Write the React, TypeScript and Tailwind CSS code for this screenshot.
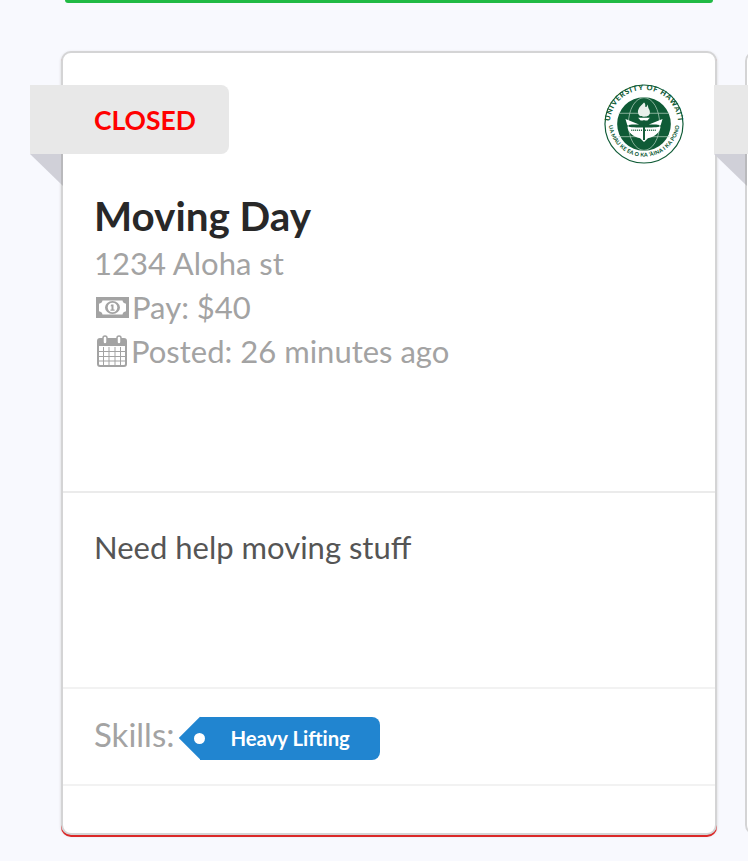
const ribbonShape = 'absolute top-[32px] left-[-33px] h-[69px] bg-[#e8e8e8]';

function MoneyIcon() {
  return (
    <svg width="33" height="21" viewBox="0 0 33 21" className="shrink-0" fill="#a3a3a3">
      <path fillRule="evenodd" d="M0 0h33v21H0zM6.500 3.500C6.200 5.400 5 6.300 3 6.700v7.600c2 .4 3.200 1.300 3.500 3.200h20c.3-1.900 1.500-2.800 3.500-3.200V6.700c-2-.4-3.200-1.300-3.500-3.200z" />
      <ellipse cx="16.500" cy="10.500" rx="7.500" ry="6.500" />
      <circle cx="16.500" cy="10.500" r="4.800" fill="#fff" />
      <path d="M15.200 7.500h2.300v5h1.100v1.200h-4.200v-1.200h1.100V9.200h-1z" />
    </svg>
  );
}

function CalendarIcon() {
  return (
    <svg width="30" height="32" viewBox="0 0 30 32" className="shrink-0" fill="none" stroke="#a3a3a3">
      <rect x="1" y="4" width="28" height="27" rx="2" strokeWidth="2" />
      <path d="M1 5h28v6H1z" fill="#a3a3a3" stroke="none" />
      <path d="M6.500 12v18M12 12v18M18 12v18M23.500 12v18M1 16.500h28M1 21.500h28M1 26h28" strokeWidth="1" />
      <rect x="6" y="1" width="4" height="8" rx="2" fill="#fff" strokeWidth="1.500" />
      <rect x="20" y="1" width="4" height="8" rx="2" fill="#fff" strokeWidth="1.500" />
    </svg>
  );
}

function Seal() {
  return (
    <svg width="80" height="80" viewBox="0 0 82 82" className="shrink-0">
      <defs>
        <path id="seal-top" d="M6.500 47A35 35 0 1 1 75.500 47" />
        <path id="seal-bottom" d="M5 44A36.500 36.500 0 0 0 77 44" />
      </defs>
      <circle cx="41" cy="41" r="40" fill="#fff" stroke="#0f5b36" strokeWidth="1.200" />
      <circle cx="41" cy="41" r="27.500" fill="#0f5b36" />
      <text fill="#0f5b36" className="font-['Lato',sans-serif] font-black text-[7.500px] tracking-[0.8px]">
        <textPath href="#seal-top" startOffset="50%" textAnchor="middle">UNIVERSITY OF HAWAI‘I</textPath>
      </text>
      <text fill="#0f5b36" className="font-['Lato',sans-serif] font-black text-[5.500px] tracking-[0.2px]">
        <textPath href="#seal-bottom" startOffset="50%" textAnchor="middle">UA MAU KE EA O KA ‘ĀINA I KA PONO</textPath>
      </text>
      <g fill="none" stroke="#a9c8b6" strokeWidth="0.800">
        <ellipse cx="41" cy="41" rx="16" ry="27" />
        <path d="M15 30h52M15 54h52" />
      </g>
      <path d="M41 19c-4 4-7 7-6 11 .4 2 2 3.500 6 3.500s5.600-1.500 6-3.500c.6-4-2-4-2-9-1 2-2 3-2.500 2.500-.5-1 .5-3-1.500-4.500z" fill="#e9f0eb" />
      <path d="M35 34.500h12l-2.500 3h-7z" fill="#fff" />
      <path d="M22 36l14 5.500c-5 0-9-.5-12 1zM60 36l-14 5.500c5 0 9-.5 12 1z" fill="#fff" />
      <path d="M24 43.500c5 1.500 29 1.500 34 0-.5 6-5 10-13 12l-4 4-4-4c-8-2-12.500-6-13-12z" fill="#fff" />
      <path d="M28 47.500h26" stroke="#0f5b36" strokeWidth="1.500" strokeDasharray="1 1" />
      <path d="M40 37.500h2v20h-2z" fill="#0f5b36" />
    </svg>
  );
}

function Ribbon({ label }: { label?: string }) {
  return (
    <>
      <div className={`${ribbonShape} w-[199px] rounded-r-[8px] flex items-center pl-[64px] pt-[2px]`}>
        {label && <span className="text-[26.500px] leading-none font-bold text-[#ff0000]">{label}</span>}
      </div>
      <div className="absolute top-[101px] left-[-33px] w-[33px] h-[32px] bg-[linear-gradient(to_right,#d0d0d8_31px,#b9b9bc_31px)] [clip-path:polygon(0_0,100%_0,100%_100%)]" />
    </>
  );
}

export default function App() {
  return (
    <div className="w-[748px] h-[861px] overflow-hidden bg-[#f8f9fe] font-['Lato',sans-serif]">
      <div className="ml-[65px] w-[648px] h-[3px] rounded-b-[4px] bg-[#21ba45]" />
      <div className="flex gap-[28px] mt-[48px] ml-[61px]">
        <div className="relative shrink-0 w-[656px] h-[784px] flex flex-col rounded-[10px] bg-white border-2 border-[#d4d4d5] shadow-[0_2px_0_0_#db2828,0_1px_3px_0_#d4d4d5]">
          <Ribbon label="CLOSED" />
          <div className="h-[438px] shrink-0 pl-[31px] pt-[140px] relative">
            <div className="absolute top-[31px] right-[31px]">
              <Seal />
            </div>
            <h2 className="text-[40.400px] leading-[46px] font-bold text-[#282828]">Moving Day</h2>
            <div className="mt-[2px] text-[31px] leading-[44px] text-[#a3a3a3]">
              <div>1234 Aloha st</div>
              <div className="flex items-center gap-[3px] pl-[2px]">
                <MoneyIcon />
                <span>Pay: $40</span>
              </div>
              <div className="flex items-center gap-[4px] pl-[3px]">
                <CalendarIcon />
                <span>Posted: 26 minutes ago</span>
              </div>
            </div>
          </div>
          <div className="h-[196px] shrink-0 pl-[31px] pt-[32px] border-t-2 border-[#ebebeb]">
            <p className="text-[31px] leading-[44px] text-[#555555]">Need help moving stuff</p>
          </div>
          <div className="h-[97px] shrink-0 pl-[31px] pt-[23px] border-t-2 border-[#f2f2f2] flex items-start gap-[26px]">
            <span className="text-[33px] leading-[44px] text-[#a3a3a3]">Skills:</span>
            <span className="relative mt-[5px] h-[43px] w-[180px] rounded-r-[8px] bg-[#2185d0] flex items-center pl-[30px]">
              <span className="absolute left-[-15px] top-[6px] w-[30px] h-[30px] rotate-45 bg-[#2185d0]" />
              <span className="absolute left-[-6px] top-[16px] w-[11px] h-[11px] rounded-full bg-white" />
              <span className="relative text-[20.300px] leading-none font-bold text-white">Heavy Lifting</span>
            </span>
          </div>
          <div className="flex-1 border-t-2 border-[#f2f2f2]" />
        </div>
        <div className="relative shrink-0 w-[656px] h-[784px] rounded-[10px] bg-white border-2 border-[#d4d4d5]">
          <Ribbon />
        </div>
      </div>
    </div>
  );
}
